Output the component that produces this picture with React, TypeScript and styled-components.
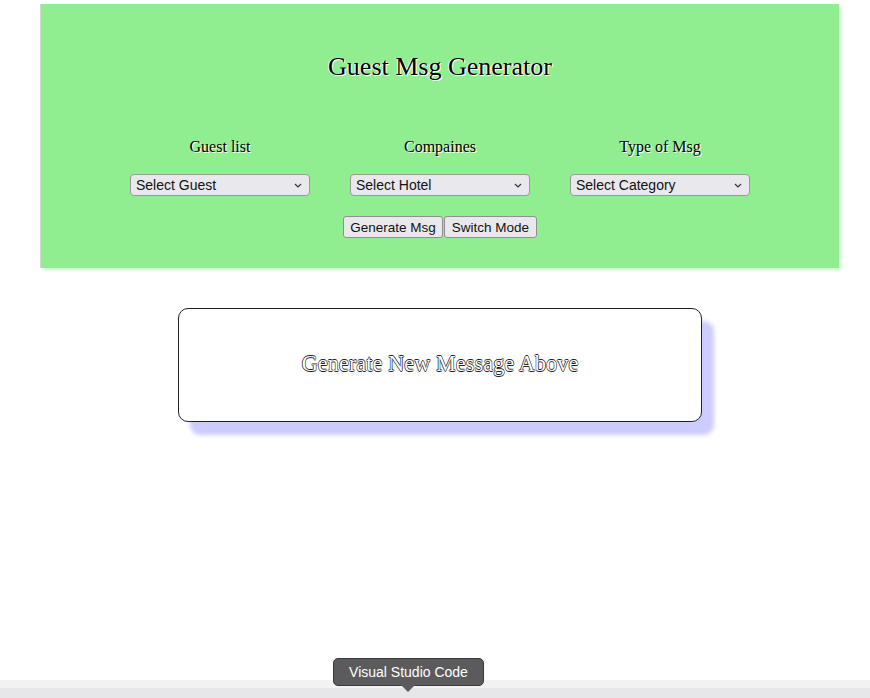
import React from "react";
import styled, { createGlobalStyle } from "styled-components";

const Global = createGlobalStyle`
  html, body { margin: 0; padding: 0; background: #ffffff; }
  body { font-family: "Liberation Serif", "Times New Roman", serif; width: 870px; height: 698px; overflow: hidden; }
`;

const Page = styled.div`
  padding: 4px 31px 0 41px;
`;

const Panel = styled.section`
  background: #90ee90;
  padding: 48px 0 30px;
  box-shadow: -1px 0 0 #cfd9cf, 2px 2px 3px #c2f7c2;
  display: flex;
  flex-direction: column;
  align-items: center;
`;

const Title = styled.h1`
  margin: 0;
  font-size: 26px;
  line-height: 30px;
  font-weight: normal;
  color: #000;
  text-shadow: 1px 1px 0 #fff, -1px 0 0 #fff;
`;

const Controls = styled.div`
  margin-top: 55px;
  display: grid;
  grid-template-columns: repeat(3, 220px);
`;

const Field = styled.div`
  display: flex;
  flex-direction: column;
  align-items: center;
`;

const Label = styled.label`
  font-size: 16px;
  line-height: 20px;
  color: #000;
  text-shadow: 1px 1px 0 #fff;
`;

const Select = styled.select`
  margin-top: 17px;
  width: 180px;
  height: 22px;
  appearance: none;
  -webkit-appearance: none;
  background: #e9e9ed
    url("data:image/svg+xml,%3Csvg xmlns='http://www.w3.org/2000/svg' width='8' height='5' viewBox='0 0 8 5'%3E%3Cpath d='M1 1l3 3 3-3' fill='none' stroke='%23333' stroke-width='1.2'/%3E%3C/svg%3E")
    no-repeat right 7px center;
  border: 1px solid #9a9a9a;
  border-radius: 4px;
  padding: 0 20px 0 5px;
  font-family: "Liberation Sans", Arial, sans-serif;
  font-size: 14px;
  color: #111;
  box-sizing: border-box;
`;

const Buttons = styled.div`
  margin-top: 20px;
  display: flex;
  gap: 1px;
`;

const Button = styled.button<{ $w: number }>`
  width: ${(p) => p.$w}px;
  height: 22px;
  padding: 0;
  background: #e9e9ed;
  border: 1px solid #8f8f8f;
  border-radius: 3px;
  font-family: "Liberation Sans", Arial, sans-serif;
  font-size: 13.5px;
  color: #111;
`;

const MessageWrap = styled.div`
  display: flex;
  justify-content: center;
  margin-top: 40px;
`;

const MessageCard = styled.div`
  width: 524px;
  height: 114px;
  box-sizing: border-box;
  border: 1px solid #222;
  border-radius: 10px;
  background: #fff;
  box-shadow: 12px 13px 4px #ccccff;
  display: flex;
  align-items: center;
  justify-content: center;
  margin: 0 96px;
`;

const MessageText = styled.p`
  margin: 0 0 2px;
  font-size: 22.4px;
  color: #fff;
  text-shadow: 0.6px 0 0 #222, -0.6px 0 0 #222, 0 0.6px 0 #222, 0 -0.6px 0 #222;
`;

const Dock = styled.div`
  position: fixed;
  left: 0;
  right: 0;
  bottom: 0;
  height: 18px;
  background: linear-gradient(#f2f2f2 0 8px, #e7e7e9 8px);
`;

const Tooltip = styled.div`
  position: fixed;
  left: 333px;
  top: 658px;
  width: 151px;
  height: 28px;
  box-sizing: border-box;
  background: #5b5b5d;
  border: 1px solid #3a3a3a;
  border-radius: 5px;
  color: #fff;
  font-family: "Liberation Sans", Arial, sans-serif;
  font-size: 14px;
  display: flex;
  align-items: center;
  justify-content: center;
  &::after {
    content: "";
    position: absolute;
    left: 67px;
    bottom: -7px;
    border-left: 7px solid transparent;
    border-right: 7px solid transparent;
    border-top: 7px solid #5b5b5d;
  }
`;

export default function App() {
  return (
    <>
      <Global />
      <Page>
        <Panel>
          <Title>Guest Msg Generator</Title>
          <Controls>
            <Field>
              <Label>Guest list</Label>
              <Select defaultValue="">
                <option value="">Select Guest</option>
              </Select>
            </Field>
            <Field>
              <Label>Compaines</Label>
              <Select defaultValue="">
                <option value="">Select Hotel</option>
              </Select>
            </Field>
            <Field>
              <Label>Type of Msg</Label>
              <Select defaultValue="">
                <option value="">Select Category</option>
              </Select>
            </Field>
          </Controls>
          <Buttons>
            <Button $w={100}>Generate Msg</Button>
            <Button $w={93}>Switch Mode</Button>
          </Buttons>
        </Panel>
        <MessageWrap>
          <MessageCard>
            <MessageText>Generate New Message Above</MessageText>
          </MessageCard>
        </MessageWrap>
      </Page>
      <Dock />
      <Tooltip>Visual Studio Code</Tooltip>
    </>
  );
}
